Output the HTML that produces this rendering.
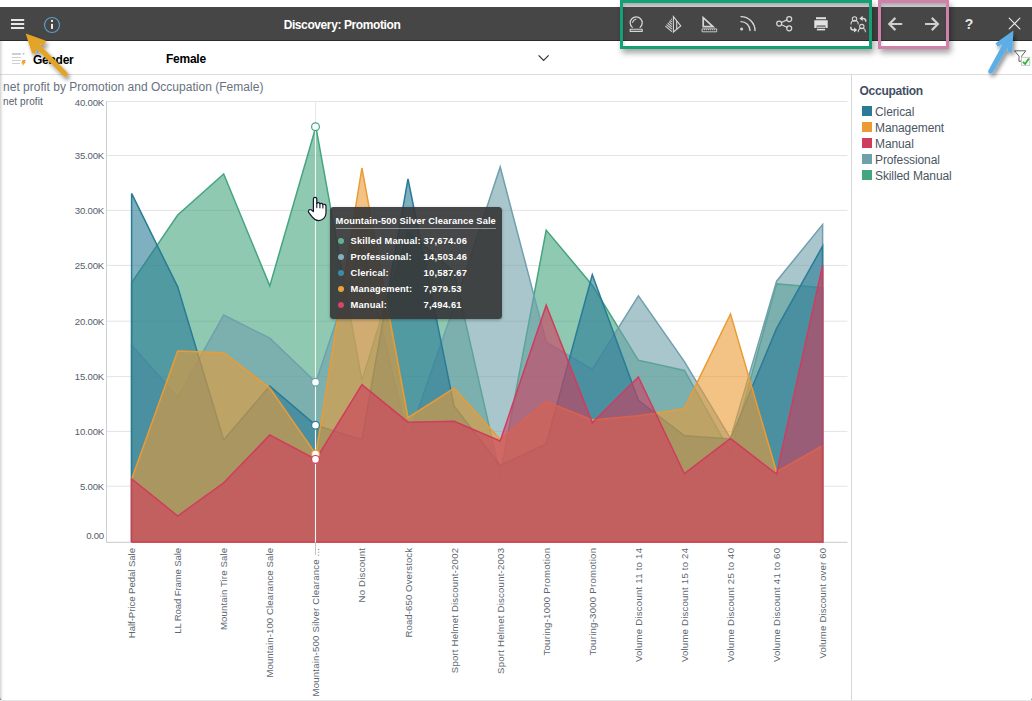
<!DOCTYPE html>
<html lang="en">
<head>
<meta charset="utf-8">
<title>Discovery: Promotion</title>
<style>
html,body{margin:0;padding:0;}
body{width:1032px;height:701px;position:relative;overflow:hidden;background:#fff;font-family:"Liberation Sans",sans-serif;}
.abs{position:absolute;}
#topbar{left:0;top:7px;width:1032px;height:32.6px;background:#464646;border-bottom:1px solid #2c2c2c;}
#title{left:242px;top:18px;width:200px;text-align:center;color:#fff;font-weight:bold;font-size:12px;letter-spacing:-0.4px;line-height:14px;}
#filterrow{left:0;top:41px;width:1032px;height:33px;border-bottom:1px solid #dcdcdc;background:#fff;}
.flabel{font-weight:bold;font-size:12px;color:#000;line-height:14px;letter-spacing:-0.25px;}
#charttitle{left:3px;top:80px;font-size:12px;color:#687280;line-height:14px;letter-spacing:0.02px;white-space:nowrap;}
#ytitle{left:3px;top:96.2px;font-size:10px;color:#55606a;line-height:12px;letter-spacing:0.1px;white-space:nowrap;}
#legend{left:851px;top:75px;width:180px;height:626px;border-left:1px solid #d6d6d6;background:#fff;}
#legend .lt{position:absolute;left:7.5px;top:9px;font-weight:bold;font-size:12px;color:#3f4f63;line-height:14px;letter-spacing:-0.26px;}
#legend .li{position:absolute;left:10px;height:10px;font-size:12px;color:#4c5661;line-height:10px;white-space:nowrap;letter-spacing:-0.1px;}
#legend .li i{display:inline-block;width:10px;height:10px;vertical-align:top;margin-right:3px;}
#legend .li span{position:relative;top:1px;}
svg text.yl{font-size:9.6px;fill:#55606a;font-family:"Liberation Sans",sans-serif;letter-spacing:-0.2px;}
svg text.xl{font-size:9.6px;fill:#5d6771;font-family:"Liberation Sans",sans-serif;}
#tooltip{left:329.6px;top:207px;width:172.4px;height:112px;background:rgba(54,55,56,0.92);border-radius:3.5px;color:#fff;font-size:9.3px;font-weight:bold;box-shadow:0 1px 3px rgba(0,0,0,0.3);}
#tooltip .tt{position:absolute;left:6px;top:7px;width:160px;height:14px;line-height:15px;border-bottom:1px solid #8f9193;white-space:nowrap;letter-spacing:0.11px;padding-bottom:0px;}
#tooltip .r{position:absolute;left:0;height:12px;line-height:12px;white-space:nowrap;letter-spacing:0.17px;margin-top:1px;}
#tooltip .r i{position:absolute;left:8px;top:2.8px;width:6px;height:6px;border-radius:50%;}
#tooltip .r b{position:absolute;left:21px;top:-0.2px;}
#tooltip .r u{position:absolute;left:94px;top:-0.2px;text-decoration:none;letter-spacing:0.24px;}
.box{box-sizing:border-box;border:3px solid;box-shadow:1.5px 3.5px 6px rgba(0,0,0,0.36), inset 1px 2px 3px rgba(0,0,0,0.16);}
#edgeL{left:0;top:41px;width:4px;height:660px;background:linear-gradient(to right,rgba(150,150,150,0.42),rgba(190,190,190,0.18) 50%,rgba(255,255,255,0));}
#edgeB{left:0;top:700px;width:1032px;height:1px;background:#e6e6e6;}
</style>
</head>
<body>
<div id="topbar" class="abs"></div>
<div id="title" class="abs">Discovery: Promotion</div>

<!-- gray strips inside annotation boxes -->
<div class="abs" style="left:620px;top:3px;width:252px;height:4px;background:#cdcdcd;"></div>
<div class="abs" style="left:878px;top:3px;width:71px;height:4px;background:#cdcdcd;"></div>

<!-- top bar icons -->
<svg class="abs" style="left:0;top:0;" width="1032" height="76" viewBox="0 0 1032 76">
  <!-- hamburger -->
  <g fill="#e6e6e6">
    <rect x="11" y="19" width="13.2" height="2"/>
    <rect x="11" y="23" width="13.2" height="2"/>
    <rect x="11" y="27" width="13.2" height="2"/>
  </g>
  <!-- info -->
  <circle cx="52" cy="25" r="7.5" fill="none" stroke="#5a9ccc" stroke-width="1.2"/>
  <rect x="51" y="23.9" width="2" height="5" fill="#ececec"/>
  <rect x="51" y="19.9" width="2" height="2" fill="#ececec"/>

  <g fill="none" stroke="#d6d6d6" stroke-width="1.25" stroke-linecap="round" stroke-linejoin="round">
    <!-- crystal ball -->
    <path d="M632.3 27.4 A6 6 0 1 1 640.1 27.4"/>
    <path d="M632.6 22.4 A4.2 4.2 0 0 1 635.8 19.2" stroke-width="1.15"/>
    <rect x="630.2" y="29.2" width="12" height="2.2" stroke-width="1.1"/>
    <!-- prism -->
    <path d="M673.4 16.6 L673.4 32 L680.8 26 Z" stroke-width="1.1" stroke-linejoin="miter"/>
    <path d="M676.7 21.4 V29" stroke-width="1.1"/>
    <path d="M665.4 26.2 L671.9 31.6 M666.5 24.7 L671.9 29.2 M667.7 23.2 L671.9 26.8 M668.9 21.7 L671.9 24.3 M670 20.3 L671.9 21.9 M671.1 18.8 L671.9 19.5" stroke-width="1.05" stroke-linecap="butt"/>
    <!-- ruler triangle -->
    <path d="M703.2 17.6 L703.2 26.6 L713 26.6 Z" stroke-width="1.7" stroke-linejoin="miter"/>
    <rect x="702.5" y="28.9" width="14.2" height="2.9" stroke-width="0.9"/>
    <path d="M704.5 29V30.3 M706.5 29V30.3 M708.5 29V30.3 M710.5 29V30.3 M712.5 29V30.3 M714.5 29V30.3" stroke-width="0.7" stroke-linecap="butt"/>
    <!-- rss -->
    <path d="M741 16.6 A14 14 0 0 1 755 30.6" stroke-width="1.4"/>
    <path d="M741 21.6 A9 9 0 0 1 750 30.6" stroke-width="1.4"/>
    <circle cx="741.6" cy="29" r="1.5" fill="#d6d6d6" stroke="none"/>
    <!-- share -->
    <circle cx="779.2" cy="23.6" r="2.5"/>
    <circle cx="789.2" cy="19" r="2.5"/>
    <circle cx="789.2" cy="28.3" r="2.5"/>
    <path d="M781.4 22.5 L787 19.9 M781.4 24.7 L787 27.3"/>
    <!-- people swap -->
    <circle cx="854.5" cy="18.9" r="2.2" stroke-width="1.1"/>
    <path d="M851 24 A3.6 3.6 0 0 1 858.2 24" stroke-width="1.1"/>
    <circle cx="861.8" cy="26.6" r="2.2" stroke-width="1.1"/>
    <path d="M858.2 31.7 A3.6 3.6 0 0 1 865.4 31.7" stroke-width="1.1"/>
    <path d="M861.6 18.4 H863.2 C865 18.4 865.8 19.6 865.8 21.2" stroke-width="1.5"/>
    <path d="M855 30 H853.4 C851.6 30 850.8 28.8 850.8 27.2" stroke-width="1.5"/>
    <!-- nav arrows -->
    <path d="M902.2 24 H889.8 M895.4 17.9 L889.3 24 L895.4 30.1" stroke="#cfcfcf" stroke-width="2.2" stroke-linecap="butt" stroke-linejoin="miter"/>
    <path d="M925 24 H937.4 M931.8 17.9 L937.9 24 L931.8 30.1" stroke="#cfcfcf" stroke-width="2.2" stroke-linecap="butt" stroke-linejoin="miter"/>
    <!-- close -->
    <path d="M1009.2 18.2 L1019.9 28.9 M1019.9 18.2 L1009.2 28.9" stroke="#ececec" stroke-width="1.1"/>
  </g>
  <!-- printer -->
  <g fill="#e2e2e2">
    <rect x="816" y="17.2" width="10" height="2"/>
    <path d="M814.3 20.2 H827.7 V28 H825.4 V25.4 H816.6 V28 H814.3 Z"/>
    <rect x="816.9" y="26.6" width="8.2" height="1.2"/>
    <rect x="816.9" y="28.8" width="8.2" height="1.6"/>
  </g>
  <!-- swap arrows of people icon -->
  <g fill="#dedede">
    <path d="M859.4 18.4 L862.6 15.8 V21 Z"/>
    <path d="M857.2 30 L854 27.4 V32.6 Z"/>
  </g>
</svg>
<div class="abs" style="left:963px;top:15.5px;width:12px;text-align:center;color:#e6e6e6;font-weight:bold;font-size:14px;line-height:16px;">?</div>

<!-- filter row -->
<div id="filterrow" class="abs"></div>
<svg class="abs" style="left:0;top:41px;" width="1032" height="34" viewBox="0 41 1032 34">
  <!-- slicer icon -->
  <rect x="12" y="53" width="9" height="2" fill="#cfcfcf"/>
  <rect x="12" y="57" width="9" height="1" fill="#cfcfcf"/>
  <rect x="12" y="60" width="9" height="1" fill="#cfcfcf"/>
  <rect x="12" y="63" width="8" height="1" fill="#cfcfcf"/>
  <path d="M22 53 H25 L23.5 55 Z" fill="#c4c4c4"/>
  <path d="M22.6 60 L26 60 L24.8 61.9 L25.8 61.9 L22 66.6 L23 63.6 L21.2 63.6 Z" fill="#f0a030"/>
  <!-- chevron -->
  <path d="M538.6 55.4 L543.6 60.4 L548.6 55.4" fill="none" stroke="#333" stroke-width="1.2"/>
  <!-- filter funnel with check -->
  <path d="M1014.5 50.8 H1025.8 L1021.6 56.2 V61 L1019 61.4 V56.2 Z" fill="#fff" stroke="#5e5e5e" stroke-width="1" stroke-linejoin="round"/>
  <rect x="1021.4" y="57.3" width="8.4" height="8" fill="#fff" stroke="#c2c2c2" stroke-width="0.9"/>
  <path d="M1022.9 61.8 L1025.1 63.9 L1028.9 58.4" fill="none" stroke="#2db52d" stroke-width="1.8"/>
</svg>
<div class="abs flabel" style="left:33px;top:53px;">Gender</div>
<div class="abs flabel" style="left:166px;top:52px;">Female</div>

<div id="charttitle" class="abs">net profit by Promotion and Occupation (Female)</div>
<div id="ytitle" class="abs">net profit</div>

<!-- chart -->
<svg class="abs" style="left:0;top:0;" width="852" height="701" viewBox="0 0 852 701">
<line x1="106" x2="847.5" y1="542.3" y2="542.3" stroke="#c8c8c8" stroke-width="1"/>
<line x1="106" x2="847.5" y1="486.2" y2="486.2" stroke="#e4e4e4" stroke-width="1"/>
<line x1="106" x2="847.5" y1="431.4" y2="431.4" stroke="#e4e4e4" stroke-width="1"/>
<line x1="106" x2="847.5" y1="376.6" y2="376.6" stroke="#e4e4e4" stroke-width="1"/>
<line x1="106" x2="847.5" y1="321.2" y2="321.2" stroke="#e4e4e4" stroke-width="1"/>
<line x1="106" x2="847.5" y1="265.4" y2="265.4" stroke="#e4e4e4" stroke-width="1"/>
<line x1="106" x2="847.5" y1="210.4" y2="210.4" stroke="#e4e4e4" stroke-width="1"/>
<line x1="106" x2="847.5" y1="155.5" y2="155.5" stroke="#e4e4e4" stroke-width="1"/>
<line x1="106" x2="847.5" y1="101.5" y2="101.5" stroke="#e4e4e4" stroke-width="1"/>
<line x1="106.5" x2="106.5" y1="101" y2="542.0" stroke="#cdcdcd" stroke-width="1"/>
<line x1="315.5" x2="315.5" y1="101.2" y2="542.0" stroke="#e8e8e8" stroke-width="1"/>
<polygon points="131.6,542.0 131.6,282.8 177.7,215.0 223.7,173.9 269.8,285.9 315.9,126.8 361.9,380.6 408.0,231.2 454.1,272.0 500.2,474.8 546.2,230.1 592.3,285.2 638.4,360.3 684.4,370.5 730.5,452.2 776.6,283.9 822.6,287.7 822.6,542.0" fill="#44A57F" fill-opacity="0.6" stroke="none"/>
<polyline points="131.6,542.0 131.6,282.8 177.7,215.0 223.7,173.9 269.8,285.9 315.9,126.8 361.9,380.6 408.0,231.2 454.1,272.0 500.2,474.8 546.2,230.1 592.3,285.2 638.4,360.3 684.4,370.5 730.5,452.2 776.6,283.9 822.6,287.7 822.6,542.0 131.6,542.0" fill="none" stroke="#44A57F" stroke-width="1.5" stroke-linejoin="miter"/>
<polygon points="131.6,542.0 131.6,345.1 177.7,397.2 223.7,315.1 269.8,338.1 315.9,382.2 361.9,244.5 408.0,438.4 454.1,306.2 500.2,167.0 546.2,342.1 592.3,369.5 638.4,295.9 684.4,361.6 730.5,438.4 776.6,281.2 822.6,224.6 822.6,542.0" fill="#70A0AC" fill-opacity="0.6" stroke="none"/>
<polyline points="131.6,542.0 131.6,345.1 177.7,397.2 223.7,315.1 269.8,338.1 315.9,382.2 361.9,244.5 408.0,438.4 454.1,306.2 500.2,167.0 546.2,342.1 592.3,369.5 638.4,295.9 684.4,361.6 730.5,438.4 776.6,281.2 822.6,224.6 822.6,542.0 131.6,542.0" fill="none" stroke="#70A0AC" stroke-width="1.5" stroke-linejoin="miter"/>
<polygon points="131.6,542.0 131.6,193.4 177.7,286.9 223.7,440.0 269.8,386.1 315.9,425.3 361.9,439.7 408.0,179.0 454.1,406.1 500.2,465.4 546.2,443.9 592.3,274.7 638.4,400.3 684.4,435.8 730.5,439.0 776.6,328.4 822.6,246.2 822.6,542.0" fill="#2A7B96" fill-opacity="0.6" stroke="none"/>
<polyline points="131.6,542.0 131.6,193.4 177.7,286.9 223.7,440.0 269.8,386.1 315.9,425.3 361.9,439.7 408.0,179.0 454.1,406.1 500.2,465.4 546.2,443.9 592.3,274.7 638.4,400.3 684.4,435.8 730.5,439.0 776.6,328.4 822.6,246.2 822.6,542.0 131.6,542.0" fill="none" stroke="#2A7B96" stroke-width="1.5" stroke-linejoin="miter"/>
<polygon points="131.6,542.0 131.6,479.2 177.7,351.0 223.7,352.7 269.8,388.1 315.9,454.1 361.9,168.0 408.0,417.7 454.1,388.2 500.2,439.5 546.2,401.5 592.3,419.9 638.4,415.8 684.4,408.7 730.5,314.0 776.6,472.0 822.6,445.5 822.6,542.0" fill="#EB9B35" fill-opacity="0.6" stroke="none"/>
<polyline points="131.6,542.0 131.6,479.2 177.7,351.0 223.7,352.7 269.8,388.1 315.9,454.1 361.9,168.0 408.0,417.7 454.1,388.2 500.2,439.5 546.2,401.5 592.3,419.9 638.4,415.8 684.4,408.7 730.5,314.0 776.6,472.0 822.6,445.5 822.6,542.0 131.6,542.0" fill="none" stroke="#EB9B35" stroke-width="1.5" stroke-linejoin="miter"/>
<polygon points="131.6,542.0 131.6,478.7 177.7,516.0 223.7,482.8 269.8,434.9 315.9,459.4 361.9,384.6 408.0,422.2 454.1,421.2 500.2,440.9 546.2,305.3 592.3,422.8 638.4,377.0 684.4,473.7 730.5,438.5 776.6,474.2 822.6,265.1 822.6,542.0" fill="#D03C5E" fill-opacity="0.6" stroke="none"/>
<polyline points="131.6,542.0 131.6,478.7 177.7,516.0 223.7,482.8 269.8,434.9 315.9,459.4 361.9,384.6 408.0,422.2 454.1,421.2 500.2,440.9 546.2,305.3 592.3,422.8 638.4,377.0 684.4,473.7 730.5,438.5 776.6,474.2 822.6,265.1 822.6,542.0 131.6,542.0" fill="none" stroke="#D03C5E" stroke-width="1.5" stroke-linejoin="miter"/>
<line x1="315.5" x2="315.5" y1="126.8" y2="542.0" stroke="#f4f4f4" stroke-width="1.1"/>
<line x1="315.5" x2="315.5" y1="542.0" y2="555" stroke="#c4c4c4" stroke-width="1"/>
<circle cx="315.5" cy="126.8" r="3.9" fill="#ffffff" stroke="#44A57F" stroke-width="1.2"/>
<circle cx="315.5" cy="382.2" r="3.9" fill="#ffffff" stroke="#70A0AC" stroke-width="1.2"/>
<circle cx="315.5" cy="425.3" r="3.9" fill="#ffffff" stroke="#2A7B96" stroke-width="1.2"/>
<circle cx="315.5" cy="454.1" r="3.9" fill="#ffffff" stroke="#EB9B35" stroke-width="1.2"/>
<circle cx="315.5" cy="459.4" r="3.9" fill="#ffffff" stroke="#D03C5E" stroke-width="1.2"/>
<text x="104" y="538.8" text-anchor="end" class="yl">0.00</text>
<text x="104" y="489.6" text-anchor="end" class="yl">5.00K</text>
<text x="104" y="434.8" text-anchor="end" class="yl">10.00K</text>
<text x="104" y="380.0" text-anchor="end" class="yl">15.00K</text>
<text x="104" y="324.6" text-anchor="end" class="yl">20.00K</text>
<text x="104" y="268.8" text-anchor="end" class="yl">25.00K</text>
<text x="104" y="213.8" text-anchor="end" class="yl">30.00K</text>
<text x="104" y="158.9" text-anchor="end" class="yl">35.00K</text>
<text x="104" y="105.9" text-anchor="end" class="yl">40.00K</text>
<text transform="translate(135.1,548) rotate(-90)" text-anchor="end" class="xl" textLength="90.2" lengthAdjust="spacing">Half-Price Pedal Sale</text>
<text transform="translate(181.2,548) rotate(-90)" text-anchor="end" class="xl" textLength="85.8" lengthAdjust="spacing">LL Road Frame Sale</text>
<text transform="translate(227.2,548) rotate(-90)" text-anchor="end" class="xl" textLength="82.1" lengthAdjust="spacing">Mountain Tire Sale</text>
<text transform="translate(273.3,548) rotate(-90)" text-anchor="end" class="xl" textLength="129.6" lengthAdjust="spacing">Mountain-100 Clearance Sale</text>
<text transform="translate(319.4,548) rotate(-90)" text-anchor="end" class="xl" textLength="148.4" lengthAdjust="spacing">Mountain-500 Silver Clearance ...</text>
<text transform="translate(365.4,548) rotate(-90)" text-anchor="end" class="xl" textLength="54.5" lengthAdjust="spacing">No Discount</text>
<text transform="translate(411.5,548) rotate(-90)" text-anchor="end" class="xl" textLength="89.5" lengthAdjust="spacing">Road-650 Overstock</text>
<text transform="translate(457.6,548) rotate(-90)" text-anchor="end" class="xl" textLength="125.2" lengthAdjust="spacing">Sport Helmet Discount-2002</text>
<text transform="translate(503.7,548) rotate(-90)" text-anchor="end" class="xl" textLength="125.9" lengthAdjust="spacing">Sport Helmet Discount-2003</text>
<text transform="translate(549.7,548) rotate(-90)" text-anchor="end" class="xl" textLength="107.5" lengthAdjust="spacing">Touring-1000 Promotion</text>
<text transform="translate(595.8,548) rotate(-90)" text-anchor="end" class="xl" textLength="107.5" lengthAdjust="spacing">Touring-3000 Promotion</text>
<text transform="translate(641.9,548) rotate(-90)" text-anchor="end" class="xl" textLength="114.1" lengthAdjust="spacing">Volume Discount 11 to 14</text>
<text transform="translate(687.9,548) rotate(-90)" text-anchor="end" class="xl" textLength="114.1" lengthAdjust="spacing">Volume Discount 15 to 24</text>
<text transform="translate(734.0,548) rotate(-90)" text-anchor="end" class="xl" textLength="114.1" lengthAdjust="spacing">Volume Discount 25 to 40</text>
<text transform="translate(780.1,548) rotate(-90)" text-anchor="end" class="xl" textLength="114.1" lengthAdjust="spacing">Volume Discount 41 to 60</text>
<text transform="translate(826.1,548) rotate(-90)" text-anchor="end" class="xl" textLength="110.5" lengthAdjust="spacing">Volume Discount over 60</text>
</svg>

<!-- legend -->
<div id="legend" class="abs">
  <div class="lt">Occupation</div>
  <div class="li" style="top:31px;"><i style="background:#2A7B96"></i><span>Clerical</span></div>
  <div class="li" style="top:47px;"><i style="background:#EB9B35"></i><span>Management</span></div>
  <div class="li" style="top:63px;"><i style="background:#D03C5E"></i><span>Manual</span></div>
  <div class="li" style="top:79px;"><i style="background:#70A0AC"></i><span>Professional</span></div>
  <div class="li" style="top:95px;"><i style="background:#44A57F"></i><span>Skilled Manual</span></div>
</div>

<!-- tooltip -->
<div id="tooltip" class="abs">
  <div class="tt">Mountain-500 Silver Clearance Sale</div>
  <div class="r" style="top:27px;"><i style="background:#5fb394"></i><b>Skilled Manual:</b><u>37,674.06</u></div>
  <div class="r" style="top:43px;"><i style="background:#86b0ba"></i><b>Professional:</b><u>14,503.46</u></div>
  <div class="r" style="top:59px;"><i style="background:#3d8ca6"></i><b>Clerical:</b><u>10,587.67</u></div>
  <div class="r" style="top:75px;"><i style="background:#e9a23f"></i><b>Management:</b><u>7,979.53</u></div>
  <div class="r" style="top:91px;"><i style="background:#d3466a"></i><b>Manual:</b><u>7,494.61</u></div>
</div>

<!-- cursor hand -->
<svg class="abs" style="left:300px;top:190px;" width="40" height="40" viewBox="300 190 40 40">
  <path d="M313.4 211.6 V199 C313.4 196.7 316.8 196.7 316.8 199 V203.4 C317.4 202.2 319.6 202.3 319.9 203.8 C320.6 202.9 322.6 203.2 322.9 204.6 C323.8 203.9 326 204.3 326 206 V213 C326 217 322.6 220.6 318.6 220.6 C315.4 220.6 313.8 219 312.4 217.2 L309 212.8 C307.4 210.8 309.4 208.6 311.4 210 Z" fill="#fff" stroke="#15152a" stroke-width="1.2" stroke-linejoin="round"/>
  <path d="M316.8 203.4 V207.6 M319.9 203.8 V207.8 M322.9 204.6 V208" stroke="#15152a" stroke-width="1.1" fill="none" stroke-linecap="round"/>
</svg>

<!-- annotation boxes -->
<div class="abs box" style="left:620px;top:0px;width:252px;height:49px;border-color:#12a074;"></div>
<div class="abs box" style="left:878px;top:0px;width:71px;height:49px;border-color:#d17fab;"></div>

<!-- annotation arrows -->
<svg class="abs" style="left:0;top:0;" width="1032" height="110" viewBox="0 0 1032 110">
  <defs>
    <filter id="sh" x="-20%" y="-20%" width="150%" height="150%">
      <feGaussianBlur in="SourceAlpha" stdDeviation="2"/>
      <feOffset dx="2" dy="3" result="o"/>
      <feComponentTransfer><feFuncA type="linear" slope="0.45"/></feComponentTransfer>
      <feMerge><feMergeNode/><feMergeNode in="SourceGraphic"/></feMerge>
    </filter>
  </defs>
  <g filter="url(#sh)">
    <path d="M25.7 33.4 L46 40.8 L44.5 45.4 L38.8 43.7 L67.4 72.6 Q68.7 74.8 66.8 76.3 Q64.9 77.5 63.5 76 L35.3 47.5 L36.8 52.2 L32.1 53.7 Z" fill="#e2a427"/>
  </g>
  <g filter="url(#sh)">
    <path d="M1013.4 30.6 L1012.2 52.1 L1007.5 51.8 L1007.9 47.3 L993.2 72 Q991.6 74.5 989.4 73.5 Q987.3 72.2 988.4 70.4 L1002.6 44.2 L997.7 46.8 L995.5 43.2 Z" fill="#5dade6"/>
  </g>
</svg>

<div id="edgeL" class="abs"></div>
<svg class="abs" style="left:0;top:696px;" width="1032" height="5" viewBox="0 0 1032 5">
  <path d="M0 0.5 Q0.3 4.2 4.5 5 L0 5 Z" fill="#8f8f8f"/>
  <path d="M1032 1.5 Q1031.6 4.4 1028.5 5 L1032 5 Z" fill="#9a9a9a"/>
</svg>
<div id="edgeB" class="abs"></div>
</body>
</html>
